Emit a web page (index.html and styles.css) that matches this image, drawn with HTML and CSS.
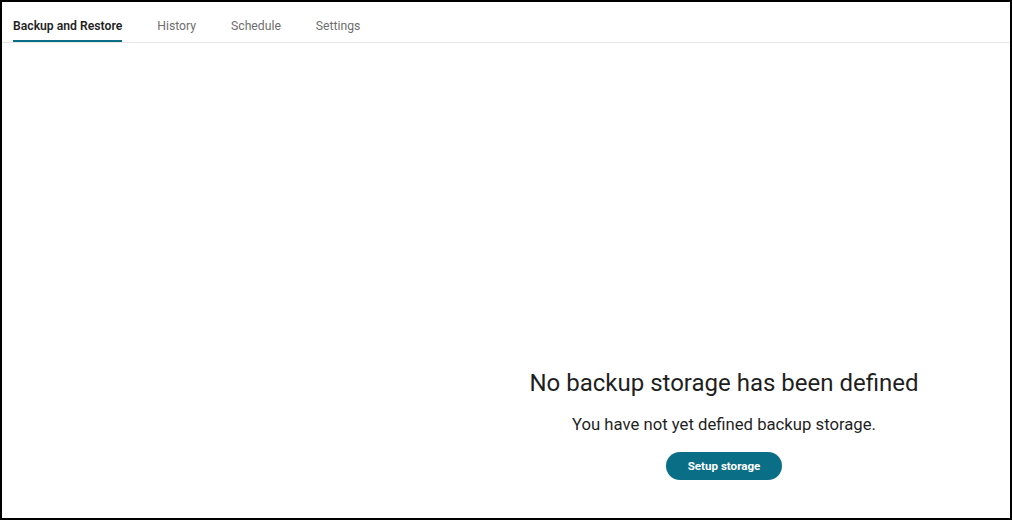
FILE: index.html
```html
<!DOCTYPE html>
<html lang="en">
<head>
    <meta charset="UTF-8">
    <title>Backup and Restore</title>
    <link rel="stylesheet" href="styles.css">
</head>
<body>
    <div class="frame">
        <nav class="tabs">
            <a class="tab active">Backup and Restore</a>
            <a class="tab">History</a>
            <a class="tab">Schedule</a>
            <a class="tab">Settings</a>
        </nav>

        <main class="content">
            <div class="spacer"></div>
            <div class="empty-state">
                <h1>No backup storage has been defined</h1>
                <p>You have not yet defined backup storage.</p>
                <button type="button">Setup storage</button>
            </div>
        </main>
    </div>
</body>
</html>
```

FILE: styles.css
```css
:root {
    --primary-color: #0b6e87;
    --dark-text: #1f1f1f;
    --muted-text: #6e6e6e;
    --divider: #e6e6e6;
}

* {
    box-sizing: border-box;
    margin: 0;
    padding: 0;
}

body {
    font-family: Roboto, "Liberation Sans", sans-serif;
    background: #fff;
    color: var(--dark-text);
}

.frame {
    width: 1012px;
    height: 520px;
    border: 2px solid #000;
    display: flex;
    flex-direction: column;
}

.tabs {
    display: flex;
    gap: 35px;
    padding: 0 11px;
    border-bottom: 1px solid var(--divider);
    height: 41px;
}

.tab {
    font-size: 12.2px;
    color: var(--muted-text);
    line-height: 40px;
    padding-top: 4px;
    border-bottom: 2px solid transparent;
}

.tab.active {
    color: var(--dark-text);
    font-weight: 600;
    border-bottom-color: var(--primary-color);
}

.content {
    flex: 1;
    display: flex;
}

.spacer {
    width: 436px;
}

.empty-state {
    flex: 1;
    display: flex;
    flex-direction: column;
    align-items: center;
    padding-top: 325px;
}

h1 {
    font-size: 24px;
    font-weight: 400;
    line-height: 30px;
}

p {
    font-size: 16.7px;
    margin-top: 17px;
    line-height: 20px;
}

button {
    margin-top: 17px;
    width: 116px;
    height: 28px;
    border: none;
    border-radius: 14px;
    background: var(--primary-color);
    color: #fff;
    font-family: inherit;
    font-size: 11.6px;
    font-weight: 700;
}
```
